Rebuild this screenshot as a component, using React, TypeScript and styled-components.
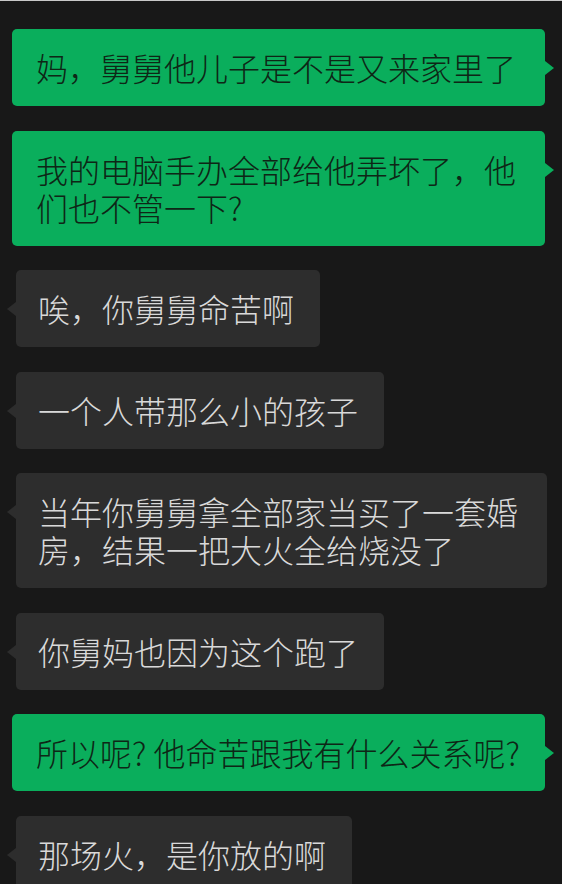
import React from "react";
import styled, { createGlobalStyle } from "styled-components";

type Side = "me" | "them";

interface Message {
  side: Side;
  text: string;
}

const messages: Message[] = [
  { side: "me", text: "妈，舅舅他儿子是不是又来家里了" },
  { side: "me", text: "我的电脑手办全部给他弄坏了，他们也不管一下?" },
  { side: "them", text: "唉，你舅舅命苦啊" },
  { side: "them", text: "一个人带那么小的孩子" },
  { side: "them", text: "当年你舅舅拿全部家当买了一套婚房，结果一把大火全给烧没了" },
  { side: "them", text: "你舅妈也因为这个跑了" },
  { side: "me", text: "所以呢? 他命苦跟我有什么关系呢?" },
  { side: "them", text: "那场火，是你放的啊" },
];

const App: React.FC = () => {
  return (
    <>
      <GlobalStyle />
      <Screen>
        <Thread>
          {messages.map((m, i) => (
            <Row key={i} $side={m.side}>
              <Bubble $side={m.side}>{m.text}</Bubble>
            </Row>
          ))}
        </Thread>
      </Screen>
    </>
  );
};

const GlobalStyle = createGlobalStyle`
  html, body {
    margin: 0;
    padding: 0;
    background: #181818;
  }
  * {
    box-sizing: border-box;
  }
`;

const Screen = styled.div`
  width: 562px;
  height: 884px;
  overflow: hidden;
  background: #181818;
  border-top: 1px solid #c8c8c8;
  font-family: "Noto Sans CJK SC", "Noto Sans", sans-serif;
`;

const Thread = styled.div`
  display: flex;
  flex-direction: column;
  gap: 24.5px;
  padding-top: 28px;
`;

const Row = styled.div<{ $side: Side }>`
  display: flex;
  justify-content: ${(p) => (p.$side === "me" ? "flex-end" : "flex-start")};
  padding: ${(p) => (p.$side === "me" ? "0 17px 0 12px" : "0 15px 0 16px")};
`;

const Bubble = styled.div<{ $side: Side }>`
  position: relative;
  max-width: 533px;
  ${(p) => (p.$side === "me" ? "width: 533px;" : "")}
  padding: ${(p) => (p.$side === "me" ? "19px 18px 20px 24px" : "19px 26px 20px 22px")};
  border-radius: 5px;
  font-size: 32px;
  font-weight: 300;
  line-height: 38px;
  background: ${(p) => (p.$side === "me" ? "#0aae5c" : "#2d2d2d")};
  color: ${(p) => (p.$side === "me" ? "#0e2616" : "#d9d9d9")};

  &::after {
    content: "";
    position: absolute;
    top: 32px;
    border-top: 7px solid transparent;
    border-bottom: 7px solid transparent;
    ${(p) =>
      p.$side === "me"
        ? "right: -9px; border-left: 9px solid #0aae5c;"
        : "left: -9px; border-right: 9px solid #2d2d2d;"}
  }
`;

export default App;
